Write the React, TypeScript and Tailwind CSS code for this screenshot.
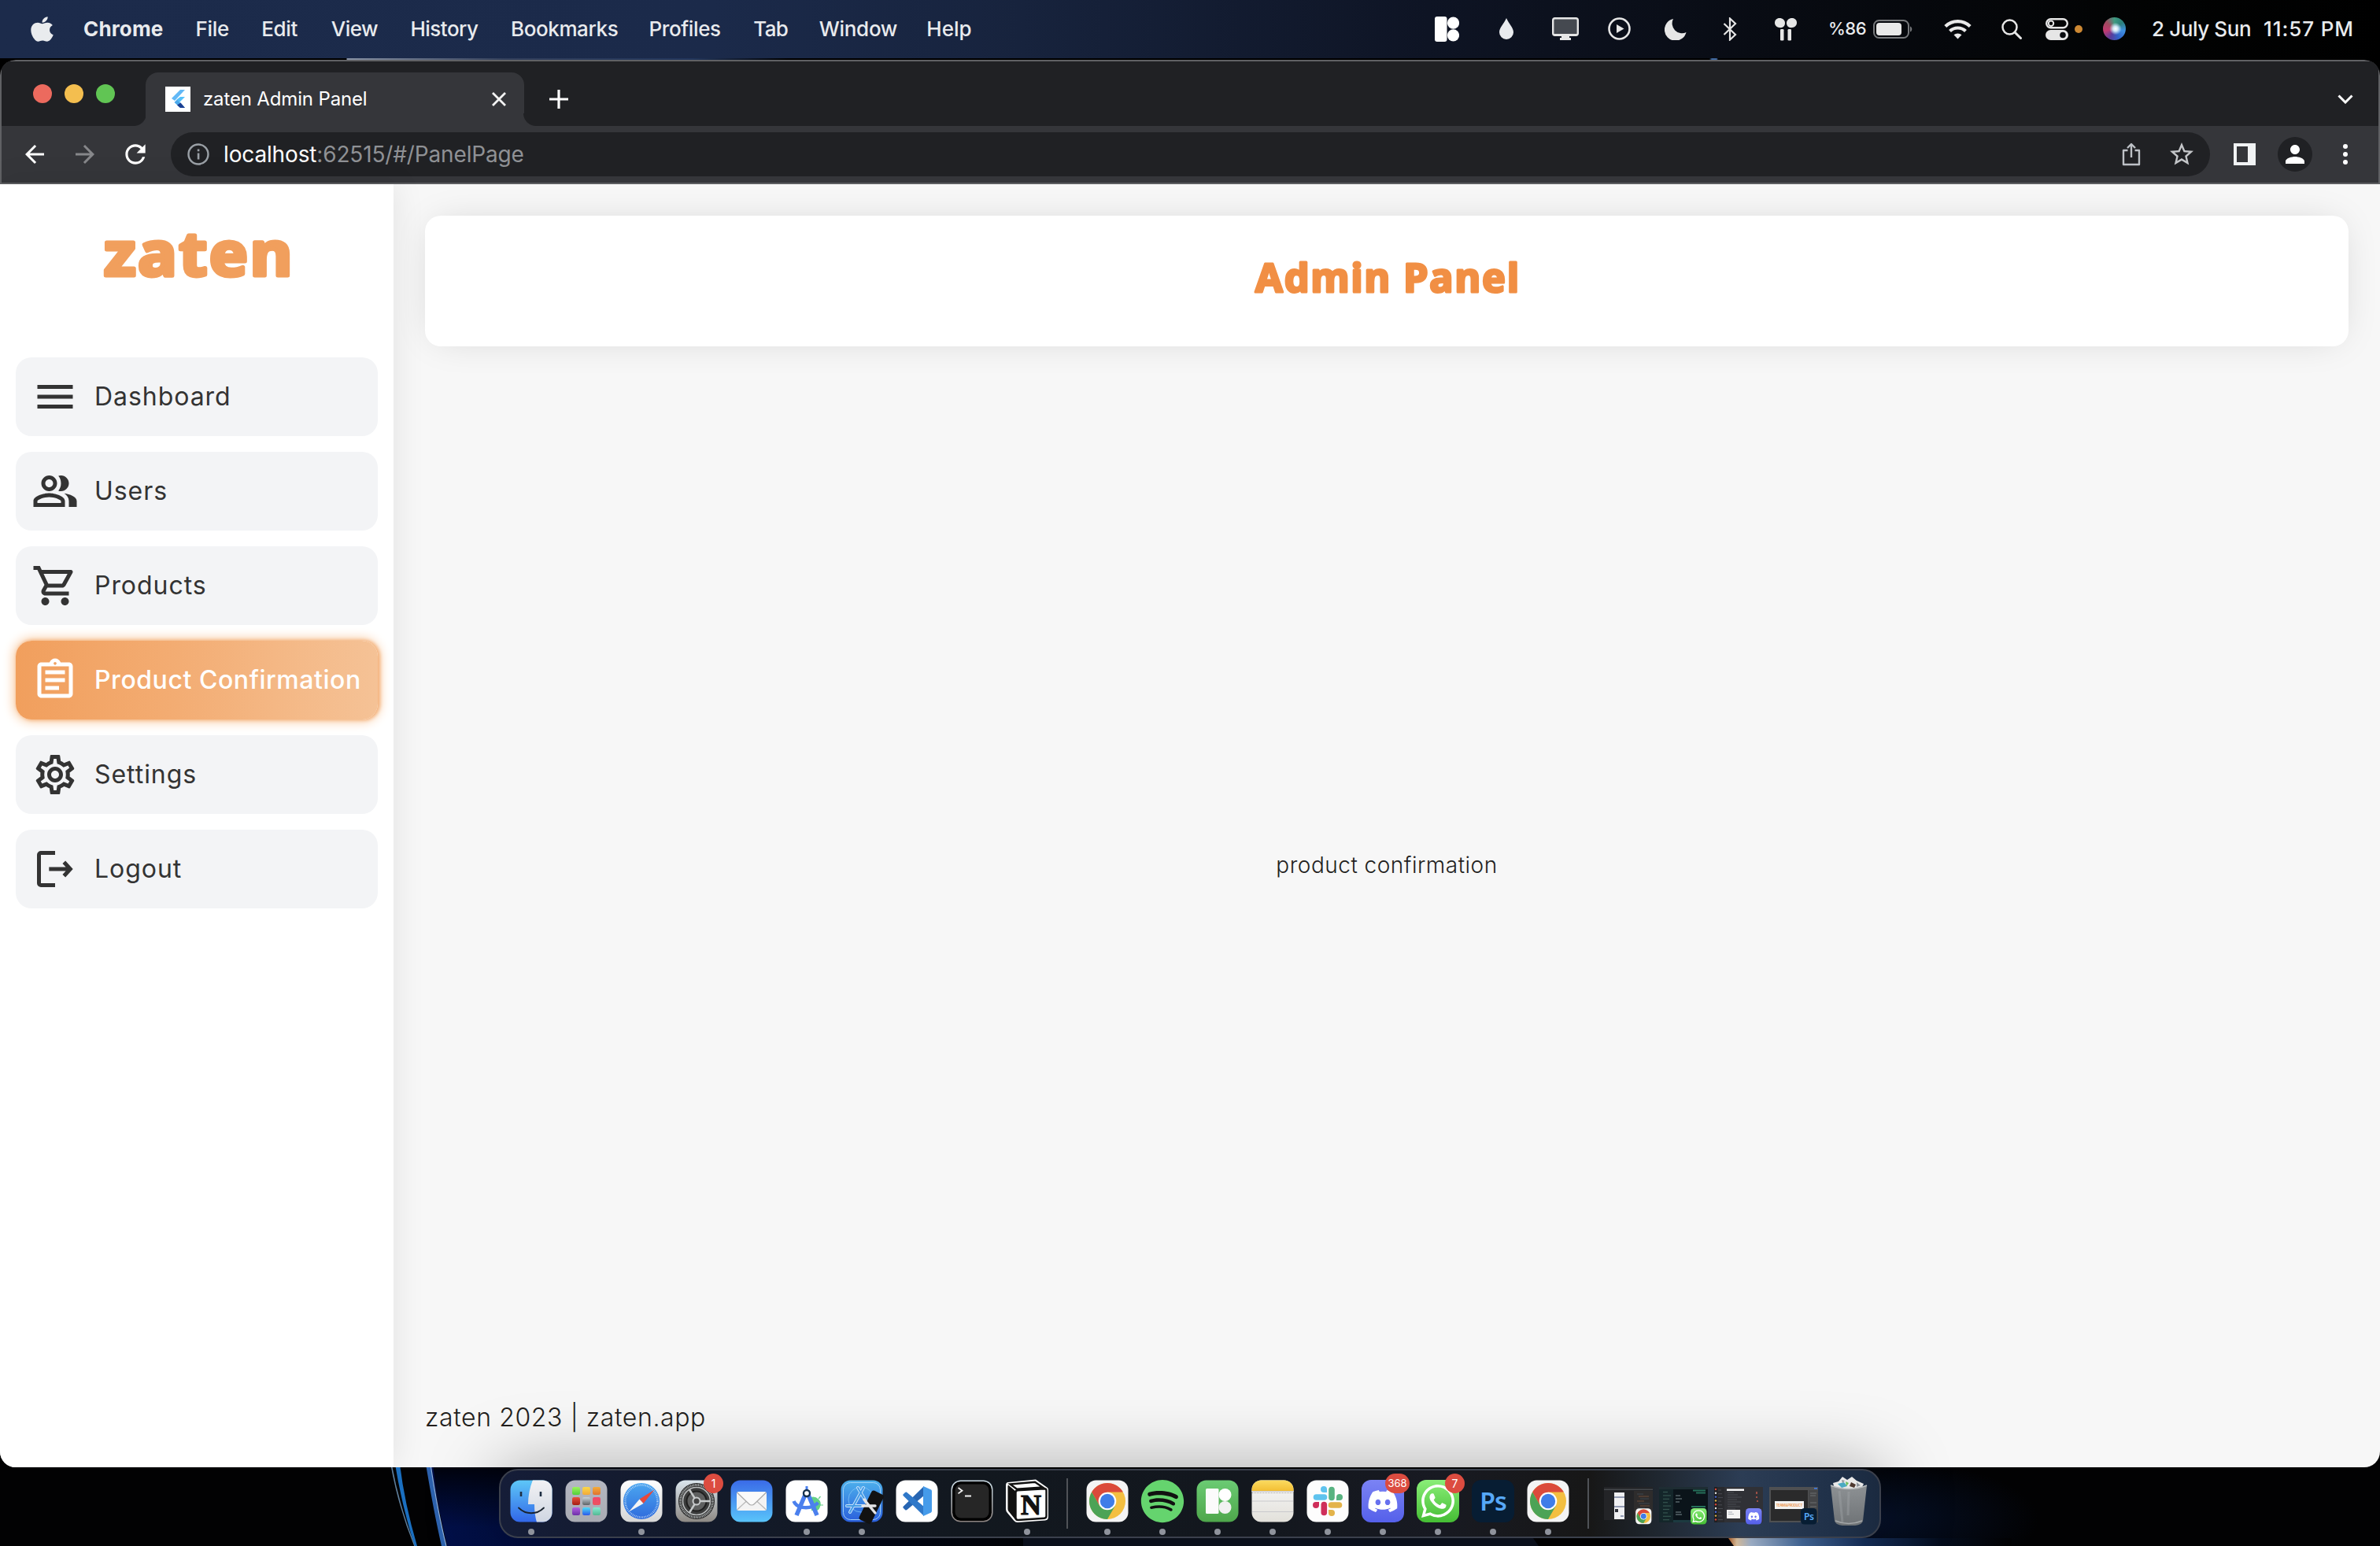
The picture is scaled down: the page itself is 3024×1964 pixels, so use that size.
import React from "react";
import { FaApple, FaDiscord, FaSpotify, FaWhatsapp } from "react-icons/fa";
import {
  MdMenu,
  MdOutlinePeopleAlt,
  MdOutlineShoppingCart,
  MdOutlineAssignment,
  MdOutlineSettings,
  MdArrowBack,
  MdArrowForward,
  MdRefresh,
  MdStarBorder,
  MdPerson,
} from "react-icons/md";

/* ---------- macOS menu bar ---------- */

const menus: { label: string; box: string }[] = [
  { label: "Chrome", box: "w-[101px] font-bold tracking-[0.15px]" },
  { label: "File", box: "w-[42px]" },
  { label: "Edit", box: "w-[47px]" },
  { label: "View", box: "w-[59px] tracking-[-0.5px]" },
  { label: "History", box: "w-[86px] tracking-[-0.5px]" },
  { label: "Bookmarks", box: "w-[134px] tracking-[-0.4px]" },
  { label: "Profiles", box: "w-[91px] tracking-[-0.4px]" },
  { label: "Tab", box: "w-[42px] tracking-[-0.6px]" },
  { label: "Window", box: "w-[95px]" },
  { label: "Help", box: "w-[56px] tracking-[0px]" },
];

function MenuBar() {
  return (
    <div className="flex h-[74px] items-center bg-[linear-gradient(to_right,#1c2b4b_0%,#1b2a4a_30%,#17233d_43%,#0e1424_60%,#080b12_75%,#020303_90%,#000_100%)] pb-px pl-[39px] text-[26px] font-medium text-[#e9ebee]">
      <FaApple className="h-[36px] w-[29px] shrink-0" preserveAspectRatio="none" />
      <div className="ml-[38px] flex items-center gap-[41.600px] tracking-[-0.3px]">
        {menus.map((m) => (
          <span key={m.label} className={"whitespace-nowrap " + m.box}>
            {m.label}
          </span>
        ))}
      </div>
      <div className="ml-auto mr-[32px] flex items-center whitespace-nowrap">
        <svg className="h-[32px] w-[31px]" viewBox="0 0 31 32" fill="#fff">
          <rect width="15.5" height="32" rx="3" />
          <circle cx="23.5" cy="8.2" r="7.6" />
          <circle cx="23.5" cy="23.8" r="7.6" />
        </svg>
        <svg className="ml-[50px] h-[27px] w-[20px]" viewBox="0 0 20 27" fill="#e9ebee">
          <path d="M10 0C7 7 1 12 1 18a9 9 0 0 0 18 0C19 12 13 7 10 0z" />
        </svg>
        <svg className="ml-[48px] h-[29px] w-[34px]" viewBox="0 0 34 29">
          <rect x="1.2" y="1.2" width="31.6" height="21.6" rx="2.5" fill="#454950" stroke="#e6e6e6" strokeWidth="2.4" />
          <path d="M2 21h30v2H2zM12 24h10v2h2v3H10v-3h2z" fill="#e6e6e6" />
        </svg>
        <svg className="ml-[37px] h-[29px] w-[29px]" viewBox="0 0 29 29">
          <circle cx="14.5" cy="14.5" r="13" fill="none" stroke="#e6e6e6" strokeWidth="2.6" />
          <path d="M11 9l9.5 5.5L11 20z" fill="#e6e6e6" />
        </svg>
        <svg className="ml-[43px] h-[28px] w-[28px]" viewBox="0 0 28 28" fill="#e6e6e6">
          <path d="M11 1A14 14 0 1 0 27.5 18 12.5 12.5 0 0 1 11 1z" />
        </svg>
        <svg className="ml-[46px] h-[30px] w-[18px]" viewBox="0 0 18 30" fill="none" stroke="#e6e6e6" strokeWidth="2.2">
          <path d="M1.500 8l14.500 14-7 6.500V1.500L16 8 1.500 22" />
        </svg>
        <svg className="ml-[47px] h-[30px] w-[30px]" viewBox="0 0 30 30" fill="#e6e6e6">
          <path d="M7 1c4 0 7 2.500 7 6.500 0 3-2 5-4 5.500-5 .8-9-2-9-6 0-3.500 2.500-6 6-6z" />
          <path d="M23 1c-4 0-7 2.500-7 6.500 0 3 2 5 4 5.500 5 .8 9-2 9-6 0-3.500-2.500-6-6-6z" />
          <rect x="8" y="15" width="4.500" height="14.500" rx="1.200" />
          <rect x="17.500" y="15" width="4.500" height="14.500" rx="1.200" />
        </svg>
        <span className="ml-[39px] w-[48px] text-[22px] tracking-[-0.5px]">%86</span>
        <svg className="ml-[9px] h-[24px] w-[50px]" viewBox="0 0 50 24">
          <rect x="1" y="1" width="44" height="22" rx="6.500" fill="none" stroke="#76787b" strokeWidth="2" />
          <rect x="4" y="4" width="32" height="16" rx="4" fill="#e9e9e9" />
          <path d="M47 8.500c3 1 3 6 0 7z" fill="#76787b" />
        </svg>
        <svg className="ml-[40px] h-[26px] w-[35px]" viewBox="0 0 35 26" fill="none" stroke="#e9e9e9" strokeWidth="4.200">
          <path d="M1.800 9.500a22.500 22.500 0 0 1 31.400 0" />
          <path d="M7.500 15.500a14.500 14.500 0 0 1 20 0" />
          <path d="M17.500 25.500l-5-5.200a7.500 7.500 0 0 1 10 0z" fill="#e9e9e9" stroke="none" />
        </svg>
        <svg className="ml-[38px] h-[26px] w-[26px]" viewBox="0 0 26 26" fill="none" stroke="#e6e6e6" strokeWidth="2.500">
          <circle cx="10.500" cy="10.500" r="9" />
          <path d="M17 17l7.500 7.500" strokeWidth="3" strokeLinecap="round" />
        </svg>
        <svg className="ml-[30px] h-[28px] w-[29px]" viewBox="0 0 29 28">
          <rect x="1.200" y="1.200" width="26.600" height="11" rx="5.500" fill="none" stroke="#e6e6e6" strokeWidth="2.400" />
          <circle cx="7" cy="6.700" r="3.200" fill="none" stroke="#e6e6e6" strokeWidth="2" />
          <rect y="15" width="29" height="13" rx="6.500" fill="#e6e6e6" />
          <circle cx="22" cy="21.500" r="3.800" fill="#0a0c10" />
        </svg>
        <span className="ml-[8px] size-[10px] rounded-full bg-[#cc8833]" />
        <span className="ml-[26px] size-[29px] rounded-full bg-[radial-gradient(circle_at_55%_50%,#fff_0%,#cfe6f5_14%,transparent_36%),conic-gradient(from_0deg,#3f9a80,#2b7f7a,#3f8fe0,#2f62c8,#5a3c9a,#c03a70,#a04a60,#3f9a80)]" />
        <span className="ml-[33px] w-[124px] tracking-[-0.4px]">2 July Sun</span>
        <span className="ml-[18px] w-[116px] tracking-[0.9px]">11:57 PM</span>
      </div>
    </div>
  );
}

/* ---------- browser chrome ---------- */

function TabStrip() {
  return (
    <div className="flex h-[82px] items-end bg-[#202124]">
      <div className="mb-[29px] ml-[40px] flex gap-[16px]">
        <span className="size-[24px] rounded-full bg-[#ec6a5e]" />
        <span className="size-[24px] rounded-full bg-[#f4be4f]" />
        <span className="size-[24px] rounded-full bg-[#61c554]" />
      </div>
      <div className="ml-[24px] size-[16px] bg-[radial-gradient(circle_at_0_0,#202124_15.500px,#35363a_16.500px)]" />
      <div className="-ml-px flex h-[68px] w-[481px] items-center rounded-t-[16px] bg-[#35363a] pl-[25px] pr-[22px]">
        <svg className="size-[32px]" viewBox="0 0 32 32">
          <rect width="32" height="32" fill="#fff" />
          <path d="M19 4h6L12 18l-4-3z" fill="#62b8f6" />
          <path d="M19 13h6l-7 7-3.500-3.500z" fill="#54c0fb" />
          <path d="M11.500 20l3.500-3.500 4.500 4.500 5.500 6h-6z" fill="#4aa8ea" />
          <path d="M15 23.500l4.500-3 5.500 6.500h-6z" fill="#1a3f92" />
        </svg>
        <span className="ml-[16px] whitespace-nowrap text-[24px] tracking-[-0.15px] text-white">zaten Admin Panel</span>
        <svg className="ml-auto size-[20px]" viewBox="0 0 20 20" stroke="#f4f4f4" strokeWidth="2.800">
          <path d="M2 2l16 16M18 2L2 18" />
        </svg>
      </div>
      <div className="-ml-px size-[16px] bg-[radial-gradient(circle_at_100%_0,#202124_15.500px,#35363a_16.500px)]" />
      <svg className="mb-[22px] ml-[17px] size-[24px]" viewBox="0 0 24 24" stroke="#fff" strokeWidth="3.200">
        <path d="M12 0v24M0 12h24" />
      </svg>
      <svg className="mb-[28px] ml-auto mr-[32px] h-[12px] w-[20px]" viewBox="0 0 20 12" fill="none" stroke="#fff" strokeWidth="3">
        <path d="M1.500 1.500L10 10l8.500-8.500" />
      </svg>
    </div>
  );
}

function Toolbar() {
  return (
    <div className="flex h-[74px] items-center border-b-2 border-[#5c5d60] bg-[#35363a] text-white">
      <MdArrowBack className="ml-[24px] size-[36px]" />
      <MdArrowForward className="ml-[28px] size-[36px] text-[#86878a]" />
      <MdRefresh className="ml-[27px] size-[38px]" />
      <div className="ml-[26px] flex h-[56px] w-[2591px] items-center rounded-full bg-[#202124] pl-[21px] pr-[18px]">
        <svg className="size-[28px]" viewBox="0 0 28 28">
          <circle cx="14" cy="14" r="12.500" fill="none" stroke="#9aa0a6" strokeWidth="2.400" />
          <path d="M12.800 12.500h2.600v8h-2.600zM12.800 7.500h2.600v2.700h-2.600z" fill="#9aa0a6" />
        </svg>
        <span className="ml-[18px] whitespace-nowrap text-[28px] tracking-[-0.15px] text-[#8f9195]">
          <span className="text-white">localhost</span>:62515/#/PanelPage
        </span>
        <svg className="ml-auto h-[30px] w-[24px]" viewBox="0 0 24 30" fill="none" stroke="#bdc1c6" strokeWidth="2.400">
          <path d="M7.500 10H2v18h20V10h-5.500M12 19V2.500M7 7l5-5 5 5" strokeLinejoin="round" />
        </svg>
        <MdStarBorder className="ml-[34px] size-[36px] text-[#c4c6c9]" />
      </div>
      <svg className="ml-[30px] size-[28px]" viewBox="0 0 28 28">
        <path fillRule="evenodd" d="M0 0h28v28H0zM4 4v20h14V4z" fill="#f1f3f4" />
      </svg>
      <span className="ml-[28px] flex size-[44px] items-center justify-center rounded-full bg-[#202124]">
        <MdPerson className="size-[36px]" />
      </span>
      <span className="ml-[39px] flex flex-col gap-[4px]">
        <span className="size-[6px] rounded-full bg-white" />
        <span className="size-[6px] rounded-full bg-white" />
        <span className="size-[6px] rounded-full bg-white" />
      </span>
    </div>
  );
}

/* ---------- admin page ---------- */

function LogoutIcon({ className }: { className?: string }) {
  return (
    <svg className={className} viewBox="0 0 60 60" fill="none" stroke="currentColor" strokeWidth="5">
      <path d="M30 9.500H12a2.500 2.500 0 0 0-2.500 2.500v36A2.500 2.500 0 0 0 12 50.500h18M22.300 30H49M41.300 21.300L49.300 30l-8 8.700" />
    </svg>
  );
}

const nav = [
  { label: "Dashboard", Icon: MdMenu },
  { label: "Users", Icon: MdOutlinePeopleAlt },
  { label: "Products", Icon: MdOutlineShoppingCart },
  { label: "Product Confirmation", Icon: MdOutlineAssignment, active: true },
  { label: "Settings", Icon: MdOutlineSettings },
  { label: "Logout", Icon: LogoutIcon },
];

function Sidebar() {
  return (
    <aside className="relative z-10 flex w-[500px] shrink-0 flex-col bg-white px-[20px] shadow-[0_0_40px_rgba(0,0,0,0.09)]">
      <div className="flex h-[220px] items-start justify-center pt-[28px]">
        <svg className="h-[124px] w-[280px] overflow-visible" viewBox="0 0 280 124">
          <text
            x="22"
            y="87.500"
            textLength="242"
            lengthAdjust="spacingAndGlyphs"
            fontSize="77"
            letterSpacing="2.500"
            strokeWidth="5"
            strokeLinejoin="round"
            className="fill-[#f19f5d] stroke-[#f19f5d] font-['Noto_Sans'] font-bold"
          >
            zaten
          </text>
        </svg>
      </div>
      <nav className="flex flex-col gap-[20px]">
        {nav.map(({ label, Icon, active }) => (
          <a
            key={label}
            className={
              "flex h-[100px] items-center rounded-[20px] pl-[20px] text-[32px] " +
              (active
                ? "bg-[linear-gradient(to_right,#f19f5d,#f3ac72_43%,#f5c296)] font-medium tracking-[0.55px] text-white shadow-[2px_0_4px_1px_#f4b27b,0_0_14px_3px_#f9cda6]"
                : "bg-[#f3f4f6] tracking-[0.95px] text-[#333]")
            }
          >
            <Icon className="size-[60px] shrink-0" />
            <span className="ml-[20px] whitespace-nowrap">{label}</span>
          </a>
        ))}
      </nav>
    </aside>
  );
}

function Page() {
  return (
    <div className="flex min-h-0 flex-1 bg-[#f7f7f7]">
      <Sidebar />
      <main className="flex flex-1 flex-col px-[40px] pt-[40px]">
        <header className="flex h-[166px] items-center justify-center rounded-[20px] bg-white shadow-[0_0_50px_-14px_rgba(0,0,0,0.18)]">
          <h1>
            <svg className="h-[100px] w-[400px] overflow-visible" viewBox="0 -10 400 100">
              <text
                x="33"
                y="53.500"
                textLength="337"
                lengthAdjust="spacingAndGlyphs"
                fontSize="50"
                letterSpacing="2"
                strokeWidth="3"
                strokeLinejoin="round"
                className="fill-[#f18f44] stroke-[#f18f44] font-['Noto_Sans'] font-bold"
              >
                Admin Panel
              </text>
            </svg>
          </h1>
        </header>
        <div className="flex flex-1 items-center justify-center pt-[20px] text-[28px] font-[360] tracking-[0.5px] text-[#231f1d]">
          product confirmation
        </div>
        <footer className="flex h-[126px] items-center text-[32px] font-[360] tracking-[0.6px] text-[#231f1d]">zaten 2023 | zaten.app</footer>
      </main>
    </div>
  );
}

/* ---------- dock icons (54 x 54 grid) ---------- */

function Svg({ children }: { children: React.ReactNode }) {
  return (
    <svg className="size-[54px] overflow-visible" viewBox="0 0 54 54">
      {children}
    </svg>
  );
}

function Tile({ fill }: { fill: string }) {
  return <rect x="0.500" y="0.500" width="53" height="53" rx="12" fill={fill} />;
}

function Gradients() {
  const list: [string, string, string][] = [
    ["finder", "#5ec8f8", "#3166e8"],
    ["face", "#f2f2f4", "#cfd6e2"],
    ["launch", "#b4b7c2", "#a9abb3"],
    ["white", "#ffffff", "#d6d6d6"],
    ["safari", "#4ba6f0", "#2f6bdc"],
    ["prefs", "#dbe6ee", "#8d8984"],
    ["mail", "#3a6be8", "#59c4fa"],
    ["xcode", "#4db1ec", "#2a5fdc"],
    ["term", "#cfe0ea", "#8c8380"],
    ["i8", "#6bcb73", "#4ea64b"],
    ["yellow", "#fbdc62", "#f3bf34"],
    ["paper", "#f8f8f8", "#e2e0da"],
    ["bin", "#8d9194", "#6f7376"],
    ["l0", "#9df45a", "#52cf3c"],
    ["l1", "#fbd94a", "#f2a93a"],
    ["l2", "#f3ad3b", "#e0722e"],
    ["l3", "#e8503c", "#a51f14"],
    ["l4", "#c9d3d9", "#5d6468"],
    ["l5", "#f2466a", "#ea5560"],
    ["l6", "#b45fe0", "#6d2fa8"],
    ["l7", "#4fdcf6", "#2c59ea"],
    ["l8", "#86ecd4", "#54b892"],
  ];
  return (
    <svg className="absolute size-0">
      <defs>
        {list.map(([id, a, b]) => (
          <linearGradient key={id} id={id} x1="0" y1="0" x2="0" y2="1">
            <stop offset="0" stopColor={a} />
            <stop offset="1" stopColor={b} />
          </linearGradient>
        ))}
        <linearGradient id="glow" x1="0" y1="0" x2="1" y2="0">
          <stop offset="0" stopColor="#c2682c" />
          <stop offset="0.030" stopColor="#f6d9b4" />
          <stop offset="0.080" stopColor="#b4c8e4" />
          <stop offset="0.260" stopColor="#4a72a8" />
          <stop offset="0.480" stopColor="#16305c" />
          <stop offset="0.750" stopColor="#040c1c" />
          <stop offset="1" stopColor="#020203" />
        </linearGradient>
        <radialGradient id="haze">
          <stop offset="0" stopColor="#06122c" />
          <stop offset="1" stopColor="#06122c" stopOpacity="0" />
        </radialGradient>
        <linearGradient id="deep" x1="0" y1="0" x2="1" y2="0">
          <stop offset="0" stopColor="#02104a" />
          <stop offset="0.300" stopColor="#010b34" />
          <stop offset="1" stopColor="#020408" />
        </linearGradient>
        <linearGradient id="shade" x1="0" y1="0" x2="0" y2="1">
          <stop offset="0" stopColor="#000000" stopOpacity="0.850" />
          <stop offset="1" stopColor="#000000" stopOpacity="0" />
        </linearGradient>
        <clipPath id="tile">
          <rect x="0.500" y="0.500" width="53" height="53" rx="12" />
        </clipPath>
      </defs>
    </svg>
  );
}

function Finder() {
  return (
    <Svg>
      <g clipPath="url(#tile)">
        <rect width="54" height="54" fill="url(#finder)" />
        <path d="M29 0C25 10 23 20 23 31h8c0 9 1 16 3 23h20V0z" fill="url(#face)" />
      </g>
      <path d="M14 15v6M39 15v6" stroke="#1e2f44" strokeWidth="2.600" />
      <path d="M11 35.500c9 9 23 9 32 0" fill="none" stroke="#1a2430" strokeWidth="1.800" strokeLinecap="round" />
    </Svg>
  );
}

const launchFills = ["url(#l0)", "url(#l1)", "url(#l2)", "url(#l3)", "url(#l4)", "url(#l5)", "url(#l6)", "url(#l7)", "url(#l8)"];

function Launchpad() {
  return (
    <Svg>
      <Tile fill="url(#launch)" />
      {launchFills.map((f, i) => (
        <rect key={f} x={9 + (i % 3) * 13} y={9 + Math.floor(i / 3) * 13} width="10" height="10" rx="2.200" fill={f} />
      ))}
    </Svg>
  );
}

function Safari() {
  return (
    <Svg>
      <Tile fill="url(#white)" />
      <circle cx="27" cy="27" r="23" fill="url(#safari)" />
      <circle cx="27" cy="27" r="20.500" fill="none" stroke="#cfe4fa" strokeWidth="2.400" strokeDasharray="0.700 1.450" />
      <path d="M43.500 12.500L29.500 30 24.500 24.500z" fill="#e8483a" />
      <path d="M11 40.500L24.500 24.500l5 5.500z" fill="#f4f4f4" />
    </Svg>
  );
}

function Preferences() {
  return (
    <Svg>
      <Tile fill="url(#prefs)" />
      <circle cx="27" cy="27" r="23" fill="#262626" />
      <circle cx="27" cy="27" r="20.500" fill="none" stroke="#a3a7a8" strokeWidth="3" strokeDasharray="1.200 0.800" />
      <circle cx="27" cy="27" r="17.500" fill="#3b3c3c" stroke="#b9bcbd" strokeWidth="1.600" />
      <circle cx="27" cy="27" r="12.500" fill="#5e5f5f" stroke="#1f1f1f" strokeWidth="2" />
      <path d="M27 27h17M27 27l-9-14.500M27 27l-9 14.500" stroke="#c6c9ca" strokeWidth="2.400" />
      <circle cx="27" cy="27" r="4.500" fill="#444" stroke="#c6c9ca" strokeWidth="2" />
    </Svg>
  );
}

function Mail() {
  return (
    <Svg>
      <Tile fill="url(#mail)" />
      <rect x="8" y="15" width="38" height="24" rx="2.500" fill="#f3f3f3" />
      <path d="M8.500 38l13-12M45.500 38l-13-12" stroke="#b9b9b9" strokeWidth="1.200" />
      <path d="M8.500 16l15 14.500c2 2 5 2 7 0l15-14.500" fill="#fafafa" stroke="#a9a9a9" strokeWidth="1.200" />
    </Svg>
  );
}

function AndroidStudio() {
  return (
    <Svg>
      <Tile fill="#fff" />
      <path d="M32 22a10 9 0 0 1 12 12q-1 4-4 5h-7z" fill="#63d086" />
      <path d="M42 24l2.500-3M44 32h4" stroke="#63d086" strokeWidth="1.200" />
      <path d="M10.500 27c4 10 22 11 31 2" fill="none" stroke="#4b80ee" strokeWidth="4.500" />
      <path d="M25 19L14 45M29 19l11 26" stroke="#4b80ee" strokeWidth="5.500" />
      <path d="M27 8v7" stroke="#4b80ee" strokeWidth="3" />
      <circle cx="27" cy="17" r="4" fill="#fff" stroke="#14304c" strokeWidth="2.400" />
    </Svg>
  );
}

function Xcode() {
  return (
    <Svg>
      <Tile fill="url(#xcode)" />
      <rect x="3.500" y="3.500" width="47" height="47" rx="9" fill="none" stroke="#a9d6f8" strokeWidth="0.900" />
      <circle cx="26" cy="25" r="16" fill="none" stroke="#7cc1f4" strokeWidth="0.800" />
      <path d="M29 10L12 41M22 10l18 31M8 33h31" stroke="#c4e2fb" strokeWidth="4" strokeLinecap="round" fill="none" />
      <path d="M29 10L12 41M22 10l18 31M8 33h31" stroke="#479ce6" strokeWidth="2" strokeLinecap="round" fill="none" />
      <rect x="31" y="14" width="17" height="41" rx="3" transform="rotate(26 39 34)" fill="#121212" />
      <path d="M30 25l14 17M28 33h16" stroke="#e4e4e6" strokeWidth="3.400" strokeLinecap="round" />
    </Svg>
  );
}

function VSCode() {
  return (
    <Svg>
      <Tile fill="#fff" />
      <path d="M36 8L10 33.500c-1 .9-1 1.600 0 2.400l2 2c.8.700 1.600.700 2.400.100L36 20z" fill="#2765b2" />
      <path d="M36 46L10 20.500c-1-.9-1-1.600 0-2.400l2-2c.8-.7 1.600-.7 2.400-.1L36 34z" fill="#2f78c9" />
      <path d="M35 8l9.500 4.200c.9.400 1.500 1.200 1.500 2.200v25.200c0 1-.6 1.800-1.500 2.200L35 46z" fill="#459bea" />
    </Svg>
  );
}

function Terminal() {
  return (
    <Svg>
      <Tile fill="url(#term)" />
      <rect x="2" y="2" width="50" height="50" rx="10.500" fill="#000" />
      <rect x="5.500" y="5.500" width="43" height="43" rx="7.500" fill="#262626" />
      <path d="M9.500 10l5 3.700-5 3.700M18 20.500h8" fill="none" stroke="#f2f2f2" strokeWidth="1.800" />
    </Svg>
  );
}

function Notion() {
  return (
    <Svg>
      <path d="M3 3L38-.5l15 10.500q1 1 1 3v34q0 4-4 4.500L15 54q-3 0-5-2.500L2 42Q0 40 0 37V7q0-4 3-4z" fill="#fff" />
      <path d="M3 6.500l9.500 8v36.500L4 40.500Q2.500 39 2.500 37V8z" fill="#111" />
      <path d="M5.500 5.500L37 2.800l10 6.700-33 2.300z" fill="#fff" stroke="#111" strokeWidth="2.400" />
      <path d="M12.500 16q0-2.500 2.500-2.700l34-2q2.500 0 2.500 2.200V46q0 2.500-2.500 2.700l-33.500 2.300q-3 0-3-3z" fill="#fff" stroke="#111" strokeWidth="2.400" />
      <text x="32" y="43.500" textAnchor="middle" fontSize="36" fontWeight="700" fill="#111" stroke="#111" strokeWidth="1.200" className="font-['Liberation_Serif',serif]">
        N
      </text>
    </Svg>
  );
}

function Chrome() {
  return (
    <Svg>
      <Tile fill="#f4f4f4" />
      <circle cx="27" cy="27" r="23" fill="#f3bf41" />
      <path d="M7.100 15.500A23 23 0 0 1 46.900 15.500H27L17 32.800z" fill="#db4a3b" />
      <path d="M7.100 15.500A23 23 0 0 0 27 50l10-17.300L27 38 17 32.800z" fill="#4ca356" />
      <circle cx="27" cy="27" r="11.300" fill="#fff" />
      <circle cx="27" cy="27" r="9.200" fill="#3f7de8" />
    </Svg>
  );
}

function Spotify() {
  return (
    <span className="flex size-[54px] items-center justify-center rounded-full bg-[#111]">
      <FaSpotify className="size-[56px] shrink-0 text-[#65d46e]" />
    </span>
  );
}

function Icons8() {
  return (
    <Svg>
      <Tile fill="url(#i8)" />
      <rect x="12" y="11" width="16.500" height="32" rx="1.500" fill="#fbfbfb" />
      <circle cx="36.500" cy="19" r="8" fill="#fff" />
      <circle cx="36.500" cy="35" r="8" fill="#f1f1f1" />
    </Svg>
  );
}

function Notes() {
  return (
    <Svg>
      <g clipPath="url(#tile)">
        <rect width="54" height="54" fill="url(#paper)" />
        <rect width="54" height="14" fill="url(#yellow)" />
      </g>
      <path d="M0 14.500h54M1 27h52M1 40.500h52" stroke="#c9c9cc" strokeWidth="1" />
      <path d="M1 16.500h52" stroke="#a5a5a5" strokeWidth="1" strokeDasharray="1 1" />
    </Svg>
  );
}

function Slack() {
  return (
    <Svg>
      <Tile fill="#fdfdfd" />
      <g strokeWidth="7.600" strokeLinecap="round">
        <path d="M12.500 22h10" stroke="#5fc3ee" />
        <path d="M32 12.500v10" stroke="#58b381" />
        <path d="M41.500 32h-10" stroke="#e3b34a" />
        <path d="M22.300 41.500v-10" stroke="#cf2f5b" />
      </g>
      <path d="M26 16h-4a4 4 0 1 1 4-4z" fill="#5fc3ee" />
      <path d="M38 26v-4a4 4 0 1 1 4 4z" fill="#58b381" />
      <path d="M28 38h4a4 4 0 1 1-4 4z" fill="#e3b34a" />
      <path d="M16 28v4a4 4 0 1 1-4-4z" fill="#cf2f5b" />
    </Svg>
  );
}

function Discord() {
  return (
    <span className="flex size-[54px] items-center justify-center rounded-[12px] bg-[linear-gradient(#7b83f4,#5560ea)]">
      <FaDiscord className="size-[40px] text-white" />
    </span>
  );
}

function WhatsApp() {
  return (
    <span className="flex size-[54px] items-center justify-center rounded-[12px] bg-[linear-gradient(#8aee78,#45bd34)]">
      <FaWhatsapp className="size-[48px] text-white" />
    </span>
  );
}

function Photoshop() {
  return (
    <span className="flex size-[54px] items-center justify-center rounded-[12px] bg-[#071d33] font-['Noto_Sans'] text-[32px] font-semibold leading-none tracking-[-1px] text-[#56a8f8]">
      Ps
    </span>
  );
}

function Trash() {
  return (
    <svg className="-mt-[5px] h-[64px] w-[48px]" viewBox="0 0 48 64">
      <path d="M4 9l7-2 5-6 6 4 6-4 6 5 9 4-3 6H6z" fill="#e9e9e9" />
      <path d="M10 10l8-2 4 5-7 2z" fill="#4aa9c2" />
      <path d="M20 7l4 2-3 4z" fill="#6bbf59" />
      <path d="M27 8l6 3-2 4-6-2z" fill="#4d382f" />
      <path d="M34 8l5 4-5 2zM15 5l4 1-3 3z" fill="#8f959c" />
      <path d="M1 12q23 9 46 0l-5 45q-1 5-10 6H16q-9-1-10-6z" fill="url(#bin)" />
      <path d="M1 12q23 9 46 0" fill="none" stroke="#b9bcbe" strokeWidth="1.500" />
      <path d="M12 19l4 40M24 20l-1 30" stroke="#a2a6a9" strokeWidth="3" opacity="0.400" />
      <path d="M7 57q17 7 34 0" fill="none" stroke="#a5a8aa" strokeWidth="1.500" />
    </svg>
  );
}

/* ---------- minimised window previews (62 px wide) ---------- */

const rows = [0, 1, 2, 3, 4, 5, 6, 7, 8];

function ThumbChrome() {
  return (
    <svg className="h-[42px] w-[62px]" viewBox="0 0 62 42">
      <rect width="62" height="42" fill="#232427" />
      <rect y="2.500" width="62" height="1.500" fill="#45484c" />
      <rect x="13" y="7" width="13" height="34" fill="#f0f0f2" />
      <path d="M13 13h13M13 25h13M21 37h4" stroke="#3a4a78" strokeWidth="1.200" />
      <rect x="14" y="28" width="4" height="4" fill="#2e3038" />
      <rect x="38" y="5" width="24" height="37" fill="#2e2c2c" />
      {rows.map((r) => (
        <path key={r} d={`M${42 + (r % 3) * 2} ${9 + r * 3}h${8 + ((r * 5) % 7)}`} stroke={r % 2 ? "#75503a" : "#3f4a54"} strokeWidth="0.900" />
      ))}
    </svg>
  );
}

function ThumbWhatsApp() {
  return (
    <svg className="h-[45px] w-[62px]" viewBox="0 0 62 45">
      <rect width="62" height="45" fill="#0b141a" />
      <rect width="18" height="45" fill="#14262a" />
      <rect width="62" height="3" fill="#1e2d33" />
      {rows.map((r) => (
        <path key={r} d={`M5 ${6.500 + r * 4.400}h${6 + ((r * 4) % 6)}`} stroke="#34544f" strokeWidth="1.200" />
      ))}
      <path d="M43 4.500h16M47 7.500h12M41 25h18M48 28h11M52 31h7" stroke="#26705a" strokeWidth="1.800" />
      <path d="M21 11h6M21 15h8M21 19h5M21 32h7M21 35h8" stroke="#7d8b8f" strokeWidth="1" />
      <rect x="18" y="42" width="44" height="3" fill="#1c3a40" />
    </svg>
  );
}

function ThumbDiscord() {
  return (
    <svg className="h-[45px] w-[62px]" viewBox="0 0 62 45">
      <rect width="62" height="45" fill="#303136" />
      <rect width="4" height="45" fill="#1e1f22" />
      <rect x="4" width="9" height="45" fill="#292a2e" />
      {rows.map((r) => (
        <g key={r}>
          <circle cx="2" cy={3 + r * 4.800} r="1.200" fill={["#d8483c", "#e6e6e6", "#4a6ae0", "#e0b84a"][r % 4]} />
          <path d={`M5 ${4 + r * 4.700}h${4 + (r % 3)}M17 ${7 + r * 3}h${8 + ((r * 5) % 11)}`} stroke="#4c4e55" strokeWidth="0.900" />
        </g>
      ))}
      <rect x="16" y="2.500" width="22" height="2.400" fill="#fff" />
      <rect x="16" y="29" width="17" height="11" fill="#f3f3f3" />
      <path d="M18 32h5M18 34.500h7" stroke="#98a0a8" strokeWidth="0.800" />
      <path d="M54 6v3M54 12v2M55 17v2" stroke="#b8584a" strokeWidth="1.600" />
    </svg>
  );
}

function ThumbPhotoshop() {
  return (
    <svg className="h-[45px] w-[62px]" viewBox="0 0 62 45">
      <rect width="62" height="45" fill="#4f5052" />
      <rect x="2" y="4" width="47" height="39" fill="#2a2a2b" />
      <rect x="50" y="4" width="12" height="41" fill="#454648" />
      <path d="M52 8h8M52 11h7M52 20h8M52 25h8M52 30h6" stroke="#6c6e71" strokeWidth="1" />
      <rect x="57" y="1" width="4" height="1.600" fill="#3f7de8" />
      <rect x="7" y="18" width="37" height="10" fill="#f3f3f3" />
      <text x="25.500" y="24.800" textAnchor="middle" fontSize="4.600" fontWeight="700" fill="#eea262" textLength="34" className="font-['Inter']">
        TEAM &amp; PRODUCT
      </text>
    </svg>
  );
}

/* ---------- dock ---------- */

type DockApp = { id: string; Icon: () => React.ReactElement; running?: boolean; badge?: string };

const leftApps: DockApp[] = [
  { id: "finder", Icon: Finder, running: true },
  { id: "launchpad", Icon: Launchpad },
  { id: "safari", Icon: Safari, running: true },
  { id: "preferences", Icon: Preferences, badge: "1" },
  { id: "mail", Icon: Mail },
  { id: "android-studio", Icon: AndroidStudio, running: true },
  { id: "xcode", Icon: Xcode, running: true },
  { id: "vscode", Icon: VSCode },
  { id: "terminal", Icon: Terminal },
  { id: "notion", Icon: Notion, running: true },
];

const rightApps: DockApp[] = [
  { id: "chrome", Icon: Chrome, running: true },
  { id: "spotify", Icon: Spotify, running: true },
  { id: "icons8", Icon: Icons8, running: true },
  { id: "notes", Icon: Notes, running: true },
  { id: "slack", Icon: Slack, running: true },
  { id: "discord", Icon: Discord, running: true, badge: "368" },
  { id: "whatsapp", Icon: WhatsApp, running: true, badge: "7" },
  { id: "photoshop", Icon: Photoshop, running: true },
  { id: "chrome-dev", Icon: Chrome, running: true },
];

const previews = [
  { id: "p-chrome", Thumb: ThumbChrome, Icon: Chrome },
  { id: "p-whatsapp", Thumb: ThumbWhatsApp, Icon: WhatsApp },
  { id: "p-discord", Thumb: ThumbDiscord, Icon: Discord },
  { id: "p-photoshop", Thumb: ThumbPhotoshop, Icon: Photoshop },
];

function DockCell({ app }: { app: DockApp }) {
  const { Icon, running, badge } = app;
  return (
    <div className="flex w-[70px] shrink-0 flex-col items-center pt-[12px]">
      <div className="relative">
        <Icon />
        {badge && (
          <span
            className={
              "absolute -right-[7px] -top-[8px] flex h-[25px] items-center justify-center rounded-full bg-[#dc4c40] leading-none text-white " +
              (badge.length > 1 ? "w-[31px] text-[13px]" : "w-[25px] text-[14px]")
            }
          >
            {badge}
          </span>
        )}
      </div>
      {running && <span className="mt-[8px] size-[8px] rounded-full bg-[#8f939c]" />}
    </div>
  );
}

function DockSeparator() {
  return (
    <div className="flex w-[32px] shrink-0 justify-center pt-[10px]">
      <span className="h-[64px] w-[2px] bg-[#4f5257]" />
    </div>
  );
}

function Dock() {
  return (
    <div className="relative z-20 ml-[634px] mt-[2px] flex h-[88px] w-[1756px] rounded-[24px] border-2 border-[#3b404c] bg-[linear-gradient(to_right,#151d38_0%,#131a2a_15%,#12181f_34%,#13171e_55%,#181a22_68%,#171717_79%,#1f2730_84%,#2c3d55_90%,#1f3048_97%,#1b2a40_100%)] pl-[4px] shadow-[0_0_90px_rgba(0,0,0,0.34)]">
      {leftApps.map((a) => (
        <DockCell key={a.id} app={a} />
      ))}
      <DockSeparator />
      {rightApps.map((a) => (
        <DockCell key={a.id} app={a} />
      ))}
      <DockSeparator />
      {previews.map(({ id, Thumb, Icon }) => (
        <div key={id} className="relative flex w-[70px] shrink-0 justify-center pt-[21px]">
          <Thumb />
          <span className="absolute left-[44px] top-[48px] origin-top-left scale-[0.38]">
            <Icon />
          </span>
        </div>
      ))}
      <div className="flex w-[70px] shrink-0 justify-center pt-[12px]">
        <Trash />
      </div>
    </div>
  );
}

/* Desktop picture visible below the browser window. */
function Wallpaper() {
  return (
    <svg className="absolute bottom-0 left-0 h-[104px] w-[3024px]" viewBox="0 0 3024 104">
      <rect width="3024" height="104" fill="#020203" />
      <path d="M546 0h754v104H568Q556 50 546 0z" fill="url(#deep)" />
      <path d="M550 0h800v80H560z" fill="url(#shade)" />
      <path d="M1300 94h648l7 10H1300z" fill="#0c1220" />
      <ellipse cx="2360" cy="70" rx="230" ry="80" fill="url(#haze)" />
      <path d="M2196 94h360v10H2203z" fill="url(#glow)" />
      <path d="M497 0Q507 55 527 104" fill="none" stroke="#5f7f9c" strokeWidth="1.500" />
      <path d="M502 0Q511 55 527 104l3 0Q514 50 508 0z" fill="#1a6fc0" />
      <path d="M541 0Q551 60 561 104h6Q556 60 547 0z" fill="#2d62ae" />
      <path d="M547 0Q556 60 567 104" fill="none" stroke="#8fb0dc" strokeWidth="1.200" />
    </svg>
  );
}

export default function App() {
  return (
    <div className="relative h-[1964px] w-[3024px] overflow-hidden bg-black font-['Inter',sans-serif] antialiased">
      <Gradients />
      <Wallpaper />
      <div className="relative flex h-full flex-col">
        <MenuBar />
        <div className="h-[2px] bg-[linear-gradient(to_right,#000_440px,#8a94a6_441px,#33405c_640px,#22365c_880px,#000_1000px,#000_2172px,#3f68a0_2175px,#3f68a0_2181px,#000_2183px)]" />
        <div className="flex h-[1788px] flex-col overflow-hidden rounded-[20px]">
          <div className="rounded-t-[20px] border-x-2 border-t-2 border-[#606164] bg-[#202124]">
            <TabStrip />
            <Toolbar />
          </div>
          <Page />
        </div>
        <Dock />
      </div>
    </div>
  );
}
